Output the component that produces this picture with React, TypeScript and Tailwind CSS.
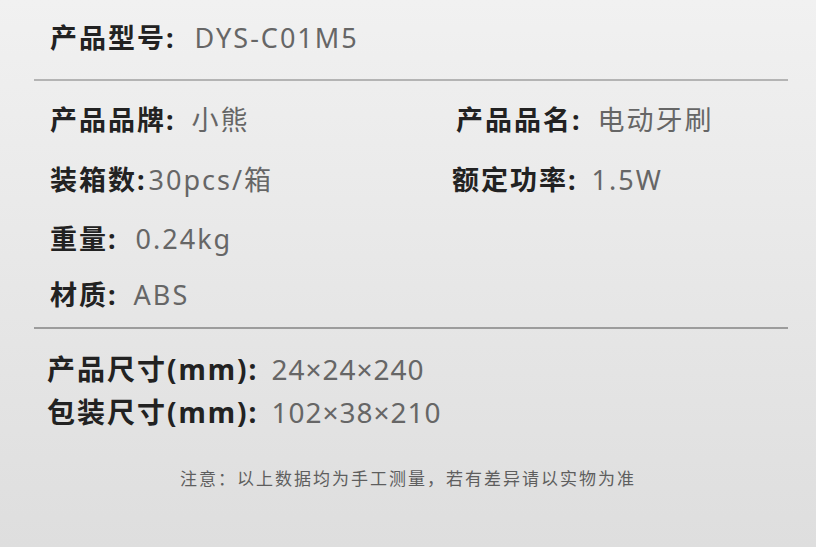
const font = { fontFamily: '"Noto Sans", "Noto Sans CJK SC", sans-serif' };

function Spec({ label, value, gap, className = '', track = 'tracking-[2px]' }: { label: string; value: string; gap: string; className?: string; track?: string }) {
    return (
        <div className={`flex items-baseline whitespace-nowrap ${className}`}>
            <span className="font-bold text-[#222222] tracking-[2px]">{label}</span>
            <span className={`text-[#666666] ${track} ${gap}`}>{value}</span>
        </div>
    );
}

export default function App() {
    return (
        <div
            className="w-[816px] h-[547px] overflow-hidden bg-gradient-to-b from-[#f1f1f1] to-[#dedede]"
            style={font}
        >
            <div className="pl-[34px] pr-[28px] text-[27px] leading-none">
                <div className="pt-[24px] pb-[28px] pl-[16px]">
                    <Spec label="产品型号:" value="DYS-C01M5" gap="ml-[19px]" />
                </div>
                <div className="h-[2px] bg-[#b4b4b4]" />

                <div className="grid grid-cols-[403px_1fr] gap-y-[33px] pl-[16px] pt-[25px]">
                    <Spec label="产品品牌:" value="小熊" gap="ml-[16px]" />
                    <Spec label="产品品名:" value="电动牙刷" gap="ml-[16px]" className="pl-[3px]" />
                    <Spec label="装箱数:" value="30pcs/箱" gap="ml-[2px]" />
                    <Spec label="额定功率:" value="1.5W" gap="ml-[14px]" className="-ml-[1px]" />
                    <Spec label="重量:" value="0.24kg" gap="ml-[18px]" className="col-span-2 -mt-[1px]" />
                    <Spec label="材质:" value="ABS" gap="ml-[16px]" className="col-span-2 -mt-[4px]" />
                </div>

                <div className="h-[2px] bg-[#9c9c9c] mt-[19px]" />

                <div className="pl-[13px] pt-[26px] flex flex-col gap-[15px] text-[28px]">
                    <Spec label="产品尺寸(mm):" value="24×24×240" gap="ml-[13px]" track="tracking-[1px]" />
                    <Spec label="包装尺寸(mm):" value="102×38×210" gap="ml-[13px]" track="tracking-[1px]" />
                </div>
            </div>

            <p className="mt-[40px] text-center text-[17px] tracking-[2px] text-[#5e5e5e]">
                注意：以上数据均为手工测量，若有差异请以实物为准
            </p>
        </div>
    );
}
